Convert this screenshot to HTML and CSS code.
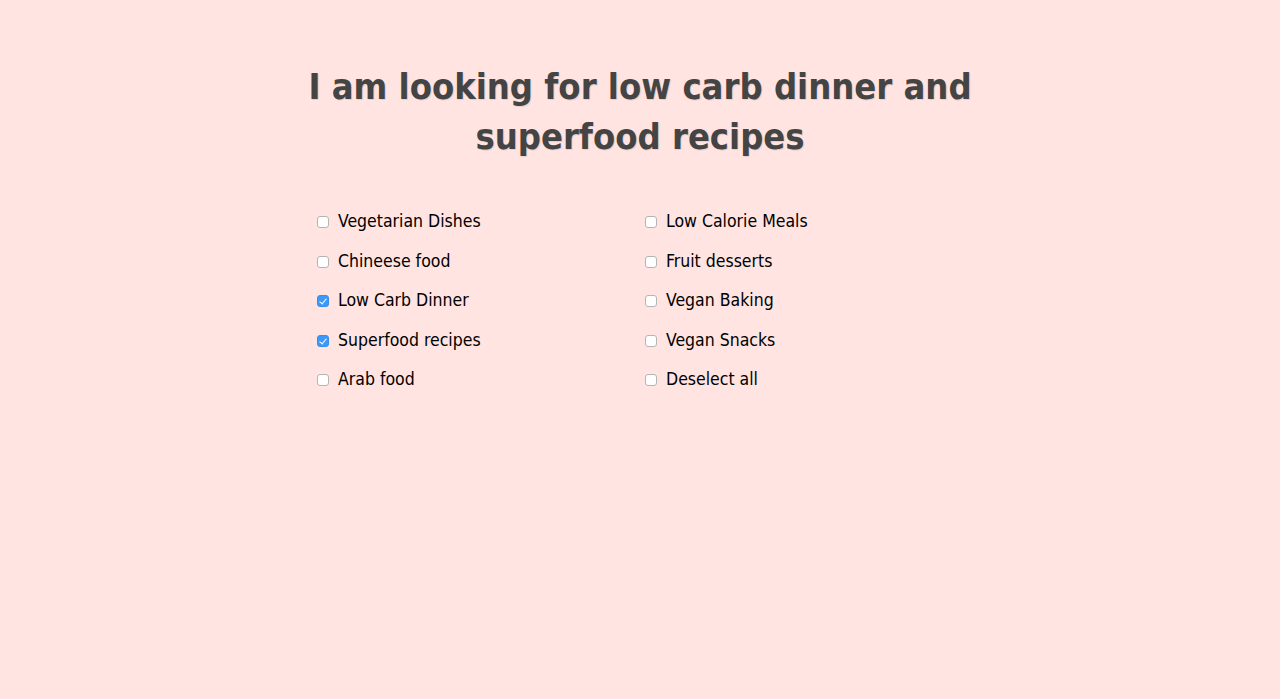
FILE: index.html
```html
<!DOCTYPE html>
<html>
<head>
<meta charset="utf-8">
<link rel="stylesheet" href="styles.css">
</head>
<body>
<div class="page">
  <h1 class="title">I am looking for low carb dinner and superfood recipes</h1>
  <div class="options">
    <label class="opt"><input type="checkbox" class="box"><span>Vegetarian Dishes</span></label>
    <label class="opt"><input type="checkbox" class="box"><span>Low Calorie Meals</span></label>
    <label class="opt"><input type="checkbox" class="box"><span>Chineese food</span></label>
    <label class="opt"><input type="checkbox" class="box"><span>Fruit desserts</span></label>
    <label class="opt"><input type="checkbox" class="box" checked><span>Low Carb Dinner</span></label>
    <label class="opt"><input type="checkbox" class="box"><span>Vegan Baking</span></label>
    <label class="opt"><input type="checkbox" class="box" checked><span>Superfood recipes</span></label>
    <label class="opt"><input type="checkbox" class="box"><span>Vegan Snacks</span></label>
    <label class="opt"><input type="checkbox" class="box"><span>Arab food</span></label>
    <label class="opt"><input type="checkbox" class="box"><span>Deselect all</span></label>
  </div>
</div>
</body>
</html>
```

FILE: styles.css
```css
html, body {
  margin: 0;
  padding: 0;
  background: #ffe4e1;
  height: 100%;
}
body {
  font-family: "DejaVu Sans Condensed", "DejaVu Sans", Verdana, sans-serif;
  font-stretch: condensed;
}
.page {
  width: 670px;
  margin: 0 auto;
  padding-top: 62px;
}
.title {
  margin: 0 0 48px;
  text-align: center;
  font-size: 36px;
  line-height: 50px;
  font-weight: bold;
  color: #444444;
  text-shadow: 1px 1px 1px rgba(0,0,0,0.1);
}
.options {
  display: grid;
  grid-template-columns: 328px 328px;
  row-gap: 16px;
  padding-left: 12px;
}
.opt {
  display: flex;
  align-items: center;
  font-size: 17.5px;
  line-height: 23.5px;
  color: #000;
}
.box {
  appearance: none;
  -webkit-appearance: none;
  width: 12px;
  height: 12px;
  margin: 1px 9px 0 0;
  border: 1px solid #b5b5b5;
  border-radius: 3px;
  background: #fff;
  position: relative;
}
.box:checked {
  background: #3b99fc;
  border-color: #3b8fe8;
}
.box:checked::after {
  content: "";
  position: absolute;
  left: 3px;
  top: 1px;
  width: 3px;
  height: 6px;
  border: solid #fff;
  border-width: 0 1.5px 1.5px 0;
  transform: rotate(40deg);
}
```
